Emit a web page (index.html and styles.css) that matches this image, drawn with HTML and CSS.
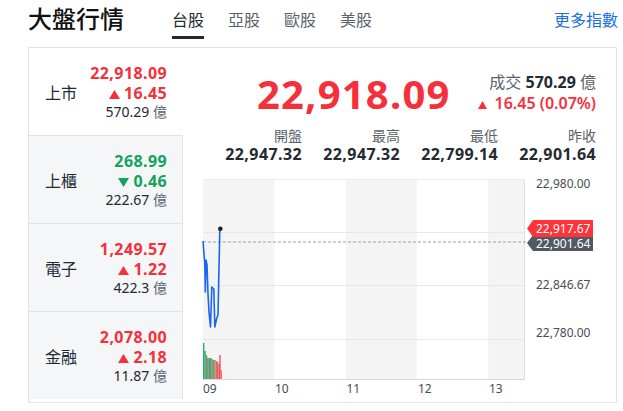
FILE: index.html
```html
<!DOCTYPE html>
<html lang="zh-Hant">
<head>
<meta charset="utf-8">
<title>大盤行情</title>
<link rel="stylesheet" href="styles.css">
</head>
<body>
<header class="top">
  <h1 class="title">大盤行情</h1>
  <nav class="tabs">
    <a class="tab active">台股</a>
    <a class="tab">亞股</a>
    <a class="tab">歐股</a>
    <a class="tab">美股</a>
  </nav>
  <a class="more">更多指數</a>
</header>

<section class="board">
  <ul class="markets">
    <li class="mkt selected">
      <span class="mkt-name">上市</span>
      <div class="mkt-nums">
        <div class="mkt-price up">22,918.09</div>
        <div class="mkt-chg up"><svg class="tri" viewBox="0 0 11 9"><polygon points="5.5,0 11,9 0,9"/></svg>16.45</div>
        <div class="mkt-vol">570.29 <span class="unit">億</span></div>
      </div>
    </li>
    <li class="mkt">
      <span class="mkt-name">上櫃</span>
      <div class="mkt-nums">
        <div class="mkt-price down">268.99</div>
        <div class="mkt-chg down"><svg class="tri" viewBox="0 0 11 9"><polygon points="0,0 11,0 5.5,9"/></svg>0.46</div>
        <div class="mkt-vol">222.67 <span class="unit">億</span></div>
      </div>
    </li>
    <li class="mkt">
      <span class="mkt-name">電子</span>
      <div class="mkt-nums">
        <div class="mkt-price up">1,249.57</div>
        <div class="mkt-chg up"><svg class="tri" viewBox="0 0 11 9"><polygon points="5.5,0 11,9 0,9"/></svg>1.22</div>
        <div class="mkt-vol">422.3 <span class="unit">億</span></div>
      </div>
    </li>
    <li class="mkt">
      <span class="mkt-name">金融</span>
      <div class="mkt-nums">
        <div class="mkt-price up">2,078.00</div>
        <div class="mkt-chg up"><svg class="tri" viewBox="0 0 11 9"><polygon points="5.5,0 11,9 0,9"/></svg>2.18</div>
        <div class="mkt-vol">11.87 <span class="unit">億</span></div>
      </div>
    </li>
  </ul>

  <div class="panel">
    <div class="quote">
      <div class="big up">22,918.09</div>
      <div class="side">
        <div class="turnover"><span class="muted">成交</span> <b>570.29</b> <span class="muted">億</span></div>
        <div class="change up"><svg class="tri tri-side" viewBox="0 0 9 8"><polygon points="4.5,0 9,8 0,8"/></svg>16.45 (0.07%)</div>
      </div>
    </div>
    <dl class="stats">
      <div class="stat"><dt>開盤</dt><dd>22,947.32</dd></div>
      <div class="stat"><dt>最高</dt><dd>22,947.32</dd></div>
      <div class="stat"><dt>最低</dt><dd>22,799.14</dd></div>
      <div class="stat"><dt>昨收</dt><dd>22,901.64</dd></div>
    </dl>
    <svg class="chart" width="433" height="230" viewBox="183 170 433 230">
      <rect x="203" y="177" width="322" height="200" fill="#ffffff"/>
      <rect x="203" y="177" width="71.3" height="200" fill="#f4f4f5"/>
      <rect x="345.6" y="177" width="71.3" height="200" fill="#f4f4f5"/>
      <rect x="488.2" y="177" width="36.8" height="200" fill="#f4f4f5"/>
      <line x1="203" y1="177.5" x2="525" y2="177.5" stroke="#ececee" stroke-width="1"/>
      <line x1="203" y1="230.5" x2="525" y2="230.5" stroke="#e7e7ea" stroke-width="1"/>
      <line x1="203" y1="283.5" x2="525" y2="283.5" stroke="#e7e7ea" stroke-width="1"/>
      <line x1="203" y1="337.5" x2="525" y2="337.5" stroke="#e7e7ea" stroke-width="1"/>
      <line x1="524.5" y1="177" x2="524.5" y2="377" stroke="#dcdfe4" stroke-width="1"/>
      <line x1="203" y1="377.5" x2="525" y2="377.5" stroke="#d6d9de" stroke-width="1"/>
      <line x1="203" y1="240" x2="532" y2="240" stroke="#9aa0a6" stroke-width="1" stroke-dasharray="3 2"/>
      <g class="vol">
        <rect x="203" y="341" width="1.4" height="36" fill="#2eaa6c"/>
        <rect x="204.4" y="349" width="1.4" height="28" fill="#2eaa6c"/>
        <rect x="205.8" y="353" width="1.4" height="24" fill="#4da877"/>
        <rect x="207.2" y="356" width="1.4" height="21" fill="#a07060"/>
        <rect x="208.6" y="356" width="1.4" height="21" fill="#3aa86e"/>
        <rect x="210" y="356" width="1.4" height="21" fill="#4aa874"/>
        <rect x="211.4" y="357" width="1.4" height="20" fill="#b0705e"/>
        <rect x="212.8" y="358" width="1.4" height="19" fill="#5aa67a"/>
        <rect x="214.2" y="358" width="1.4" height="19" fill="#b87a6a"/>
        <rect x="215.6" y="359" width="1.4" height="18" fill="#c07a6e"/>
        <rect x="217" y="360" width="1.4" height="17" fill="#d06a66"/>
        <rect x="218.4" y="362" width="1.4" height="15" fill="#ee5a5e"/>
        <rect x="219.4" y="353" width="1.2" height="24" fill="#ff333a"/>
        <rect x="220.6" y="368" width="1.4" height="9" fill="#ff6a6e"/>
      </g>
      <polyline class="line" points="203,239 204,252 204.8,262 205.3,290 206,258 207,263 208,292 209,310 210.5,325 211.8,285 213.8,287 214.8,325 216.5,317 218,313 219.8,228" fill="none" stroke="#1a66f0" stroke-width="1.6" stroke-linejoin="round"/>
      <circle cx="220.3" cy="226.8" r="2.3" fill="#1e2125"/>
      <g class="ylabels">
        <text x="536" y="186">22,980.00</text>
        <text x="536" y="287">22,846.67</text>
        <text x="536" y="335">22,780.00</text>
      </g>
      <g class="xlabels">
        <text x="203" y="391">09</text>
        <text x="275" y="391">10</text>
        <text x="346.5" y="391">11</text>
        <text x="418" y="391">12</text>
        <text x="489" y="391">13</text>
      </g>
      <polygon points="527,241 533,233 593,233 593,249 533,249" fill="#505a64"/>
      <text class="tag" x="536" y="245.5">22,901.64</text>
      <polygon points="527,226.5 533,218 593,218 593,235 533,235" fill="#ff333a"/>
      <text class="tag" x="536" y="231">22,917.67</text>
    </svg>
  </div>
</section>
</body>
</html>
```

FILE: styles.css
```css
* { box-sizing: border-box; }

body {
  margin: 0;
  background: #ffffff;
  color: #232a31;
  font-family: "Noto Sans", "Noto Sans CJK TC", sans-serif;
}

.top {
  display: flex;
  align-items: flex-start;
  height: 47px;
  padding: 0 5px 0 28px;
}

.title {
  margin: 0;
  font-size: 24px;
  font-weight: 500;
  line-height: 38px;
  color: #111;
}

.tabs {
  display: flex;
  gap: 24px;
  margin-left: 48px;
}

.tab {
  font-size: 16px;
  line-height: 24px;
  padding-top: 8px;
  padding-bottom: 4px;
  border-bottom: 3px solid transparent;
  color: #5b636a;
}

.tab.active {
  color: #232a31;
  border-bottom-color: #232a31;
}

.more {
  margin-left: auto;
  font-size: 16px;
  line-height: 40px;
  color: #1a6ee8;
}

.board {
  display: flex;
  margin-left: 28px;
  width: 589px;
  height: 356px;
  border: 1px solid #e3e3e3;
}

.markets {
  list-style: none;
  margin: 0;
  padding: 0;
  width: 154px;
  flex: none;
}

.mkt {
  display: flex;
  align-items: center;
  justify-content: space-between;
  height: 88px;
  padding: 0 15px 0 16px;
  background: #f5f6f8;
  border-right: 1px solid #e0e4e9;
  border-top: 1px solid #e0e4e9;
}

.mkt.selected {
  background: #ffffff;
  border-top: none;
  border-right-color: #ffffff;
  height: 87px;
}

.mkt-name {
  font-size: 16px;
  color: #232a31;
}

.mkt-nums {
  text-align: right;
}

.mkt-price, .mkt-chg {
  font-size: 16px;
  font-weight: 700;
  line-height: 20px;
  letter-spacing: 0.4px;
}

.mkt-vol {
  font-size: 14px;
  line-height: 18px;
  color: #232a31;
}

.unit { color: #5b636a; }

.up { color: #f5303a; }
.down { color: #12a35e; }

.tri {
  width: 11px;
  height: 9px;
  margin-right: 4px;
  fill: currentColor;
  vertical-align: 0;
}

.tri-side {
  width: 9px;
  height: 8px;
  margin-right: 8px;
}

.panel {
  flex: 1;
  min-width: 0;
}

.quote {
  display: flex;
  justify-content: flex-end;
  align-items: flex-end;
  gap: 27px;
  padding: 24px 20px 0 0;
}

.big {
  font-size: 40px;
  font-weight: 700;
  line-height: 40px;
  letter-spacing: 1.2px;
}

.side {
  text-align: right;
  font-size: 16px;
  line-height: 21px;
}

.muted { color: #5b636a; }

.turnover b { font-weight: 700; color: #232a31; }

.change { font-weight: 600; }

.stats {
  display: grid;
  grid-template-columns: repeat(4, 98px);
  justify-content: end;
  margin: 13px 0 0;
  padding-right: 20px;
}

.stat {
  text-align: right;
}

.stat dt {
  font-size: 14px;
  line-height: 17px;
  color: #5b636a;
}

.stat dd {
  margin: 0;
  font-size: 16px;
  font-weight: 700;
  line-height: 20px;
  letter-spacing: 0.4px;
  color: #232a31;
}

.chart {
  display: block;
  margin-top: 8px;
  font-family: "Noto Sans", sans-serif;
}

.ylabels text {
  font-size: 12px;
  fill: #464e56;
}

.xlabels text {
  font-size: 12px;
  fill: #464e56;
}

.tag {
  font-size: 12px;
  fill: #ffffff;
}
```
